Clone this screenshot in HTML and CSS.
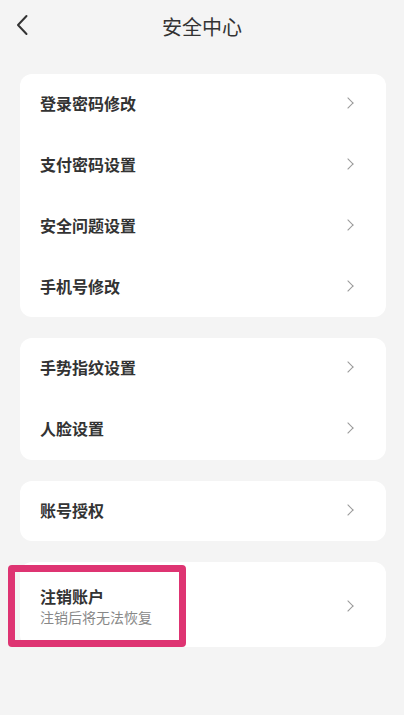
FILE: index.html
```html
<!DOCTYPE html>
<html lang="zh-CN">
<head>
    <meta charset="UTF-8">
    <meta name="viewport" content="width=device-width, initial-scale=1.0">
    <title>安全中心</title>
    <link rel="stylesheet" href="styles.css">
</head>
<body>

<div class="header">
    <span class="back">
        <svg width="14" height="22" viewBox="0 0 14 22">
            <path d="M11.5 2 L3 11 L11.5 20" fill="none" stroke="#333" stroke-width="2" stroke-linecap="round" stroke-linejoin="round"/>
        </svg>
    </span>
    <h1>安全中心</h1>
</div>

<div class="list">
    <div class="card">
        <div class="row"><span class="label">登录密码修改</span><span class="arrow"></span></div>
        <div class="row"><span class="label">支付密码设置</span><span class="arrow"></span></div>
        <div class="row"><span class="label">安全问题设置</span><span class="arrow"></span></div>
        <div class="row"><span class="label">手机号修改</span><span class="arrow"></span></div>
    </div>

    <div class="card">
        <div class="row"><span class="label">手势指纹设置</span><span class="arrow"></span></div>
        <div class="row"><span class="label">人脸设置</span><span class="arrow"></span></div>
    </div>

    <div class="card">
        <div class="row"><span class="label">账号授权</span><span class="arrow"></span></div>
    </div>

    <div class="card">
        <div class="row row-tall">
            <div>
                <div class="label">注销账户</div>
                <div class="sub">注销后将无法恢复</div>
            </div>
            <span class="arrow"></span>
        </div>
        <div class="highlight"></div>
    </div>
</div>

</body>
</html>
```

FILE: styles.css
```css
/* Estilos básicos */
body {
    margin: 0;
    background-color: #f4f4f4;
    font-family: "Noto Sans CJK SC", "Noto Sans", sans-serif;
    color: #333;
}
.header {
    height: 53px;
    display: flex;
    align-items: center;
    justify-content: center;
    position: relative;
}
.header h1 {
    margin: 0;
    font-size: 20px;
    font-weight: normal;
    color: #333;
}
.back {
    position: absolute;
    left: 15px;
    top: 14px;
    width: 14px;
    height: 22px;
}
.back svg {
    display: block;
}
.list {
    margin: 21px 18px 0 20px;
    display: flex;
    flex-direction: column;
    gap: 21px;
}
.card {
    background-color: #fff;
    border-radius: 12px;
    position: relative;
}
.row {
    height: 60.75px;
    box-sizing: border-box;
    display: flex;
    align-items: center;
    justify-content: space-between;
    padding: 0 33px 2px 20px;
}
.row-tall {
    height: 85px;
    padding-top: 2px;
    padding-bottom: 0;
}
.label {
    font-size: 16px;
    font-weight: bold;
    line-height: 22px;
    color: #333;
}
.sub {
    font-size: 14px;
    line-height: 20px;
    color: #888;
}
.arrow {
    width: 7px;
    height: 7px;
    border-top: 1.5px solid #999;
    border-right: 1.5px solid #999;
    transform: rotate(45deg);
    margin-right: 1px;
}
.highlight {
    position: absolute;
    left: -12px;
    top: 3px;
    width: 178px;
    height: 82px;
    box-sizing: border-box;
    border: 7px solid #de3472;
    border-radius: 4px;
}
```
